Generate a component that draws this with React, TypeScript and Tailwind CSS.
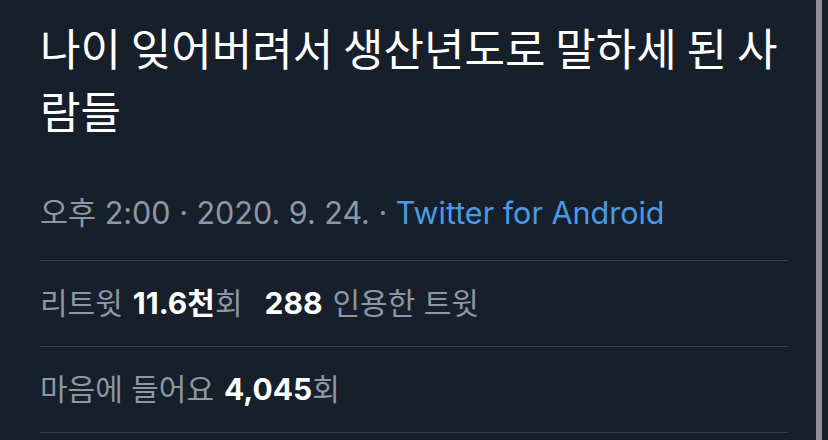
const App = () => {
  const sans = "font-['Inter','Noto_Sans_CJK_KR',sans-serif]";

  return (
    <div className={`flex h-[440px] w-[828px] overflow-hidden bg-[#161f2a] ${sans}`}>
      {/* Tweet detail */}
      <div className="flex w-[816px] flex-col pl-[40px] pr-[28px]">
        <p className="pt-[16px] text-[44px] leading-[63px] text-white font-['Noto_Sans_CJK_KR',sans-serif]">
          나이 잊어버려서 생산년도로 말하세 된 사람들
        </p>

        <div className="mt-[51px] h-[40px] text-[30.5px] leading-[40px] text-[#8b98a5]">
          오후 2:00 · 2020. 9. 24. · <span className="text-[#4a9ae5]">Twitter for Android</span>
        </div>

        <div className="mt-[27px] border-t border-[#38424c]" />

        {/* Stats */}
        <div className="flex h-[86px] items-center border-b border-[#38424c] text-[30px] text-[#8b98a5]">
          <span>리트윗</span>
          <span className="ml-[10px] font-bold text-white">11.6천</span>
          <span>회</span>
          <span className="ml-[22px] font-bold text-white">288</span>
          <span className="ml-[10px]">인용한 트윗</span>
        </div>

        <div className="flex h-[86px] items-center border-b border-[#38424c] text-[30px] text-[#8b98a5]">
          <span>마음에 들어요</span>
          <span className="ml-[10px] font-bold text-white">4,045</span>
          <span>회</span>
        </div>
      </div>

      {/* Scrollbar */}
      <div className="h-full w-[6px] bg-[#8e9099]" />
      <div className="h-full w-[6px]" />
    </div>
  );
};

export default App;
